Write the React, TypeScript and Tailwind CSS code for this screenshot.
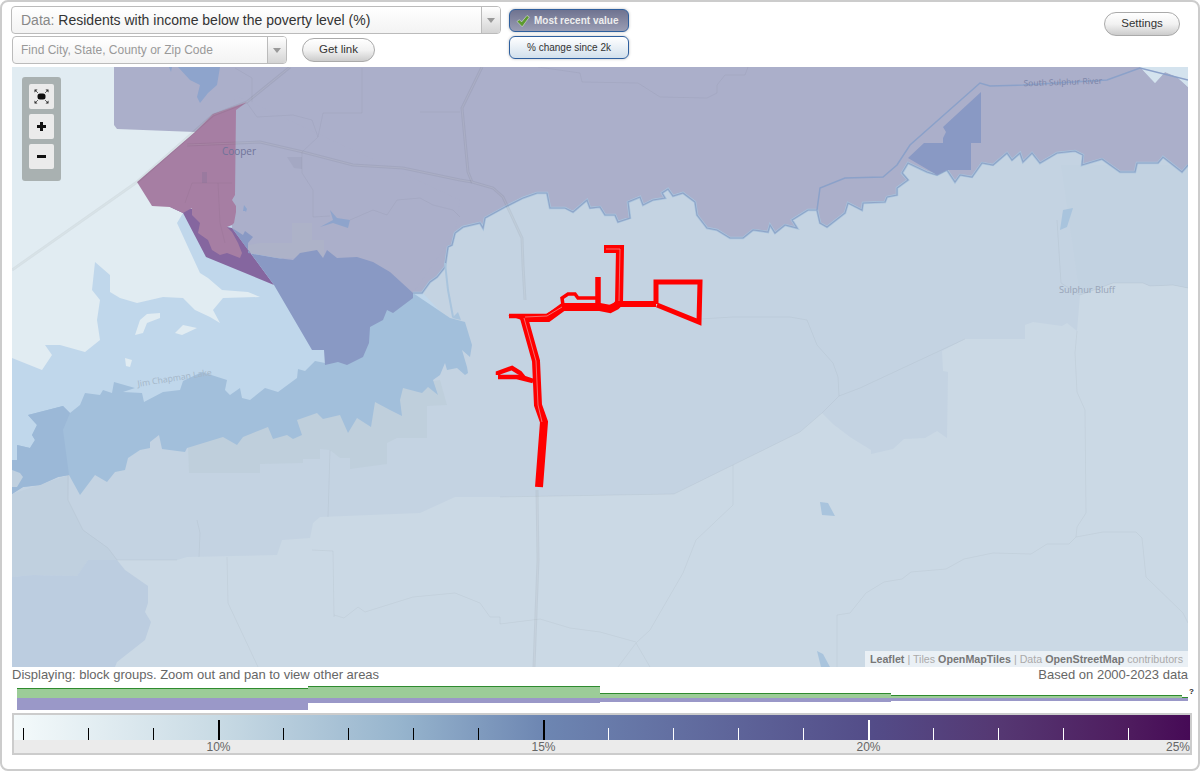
import { Fragment } from 'react';

// boundary of the top purple area, west to east
const purpleEdge =
  '413,293 422,293 430,282 437,277 445,267 448,247 452,245 455,233 463,227 480,223 483,228 485,218 505,207 523,198 537,193 547,193 550,208 565,208 573,212 587,200 590,208 600,207 605,215 615,215 618,222 630,218 628,202 640,197 643,205 653,200 665,198 662,193 668,189 673,196 683,193 695,202 697,215 707,228 717,230 730,238 743,238 753,230 768,232 770,225 775,233 785,225 797,228 792,220 808,210 817,210 820,223 827,227 845,213 848,203 862,210 863,203 885,202 887,197 897,195 897,188 908,180 902,173 908,163 927,172 937,175 947,170 955,182 960,175 972,177 982,163 993,165 1007,153 1012,160 1020,153 1023,162 1032,153 1040,163 1057,153 1075,151 1083,155 1082,165 1102,159 1120,172 1135,172 1137,163 1158,163 1163,157 1182,172 1188,165';

const bandEdge =
  '12,494 23,487 40,485 58,477 69,475 80,495 95,475 107,482 115,472 125,470 128,458 140,450 150,448 150,442 159,435 162,449 185,452 187,448 223,437 237,445 243,437 268,427 273,439 287,435 293,439 302,435 297,420 317,413 323,419 340,415 348,433 357,418 371,427 375,402 390,410 402,416 400,400 403,388 422,393 428,387 438,395 433,380 440,375 445,363 447,370 457,368 465,375 468,373 467,367 462,350 470,357 472,345 465,322 450,318 413,293 325,340 325,363 315,361 305,371 298,369 297,378 278,392 265,388 250,400 242,398 240,388 230,395 225,390 227,380 202,372 183,381 180,390 163,392 144,402 142,393 123,392 135,388 114,382 112,393 103,390 100,395 85,393 80,405 70,413 63,406 28,415 37,425 32,435 35,440 30,448 17,445 17,460 12,460';

const thinLines = [
  '538,67 580,73 582,82 638,83 660,97 707,98 717,93 717,85 725,75 745,75 748,67',
  '420,112 460,112',
  '235,68 252,78 252,102',
  '362,68 362,113 323,113 318,137 302,152 302,173 313,190 313,217 330,216',
  '247,103 257,117 293,115 312,120 318,137',
  '350,220 373,210 387,215 397,200 420,198 433,205 453,210 460,217',
  '192,183 232,183',
  '192,183 185,203',
  '218,183 220,223 225,243',
  '197,520 200,533 199,557',
  '227,557 228,603 258,667',
  '330,450 328,517',
  '312,550 333,551 334,617',
  '334,615 344,618 358,607 365,612 413,597 455,593 480,603 490,617 500,617 500,624 540,619 570,628 600,632 636,642',
  '733,465 733,505 696,540 683,573 650,630 636,643 618,667',
  '636,643 650,667',
  '700,319 733,317 790,317 807,320 817,345 833,363 838,377 839,396 822,413',
  '839,396 860,388 965,339',
  '1057,220 1061,283 1080,295',
  '1077,331 1075,353 1077,392 1085,410 1086,513 1077,527 1076,537 1069,544 1047,544 1031,554 993,553 964,559 946,569 911,572 902,579 884,582 866,593 850,613 837,615 837,667',
  '1076,537 1103,532 1136,532 1142,538 1146,577 1183,613 1188,623',
  '68,475 68,500 83,530 108,548 117,560 177,560',
  '500,497 674,494 800,432 822,413',
  '1080,295 1113,283 1143,283 1150,286 1173,285 1188,288',
];

const highways = [
  '12,270 137,182 213,115 247,102 290,67',
  '187,145 260,142 303,152 353,165 403,168 460,180 472,182',
  '482,67 462,108 468,172 472,182 493,188 503,197 522,238 523,265 525,300',
  '537,490 538,560 534,667',
];

function PoliticalMap() {
  return (
    <svg viewBox="12 67 1176 600" className="block h-[600px] w-[1176px]">
      <rect x="12" y="67" width="1176" height="600" fill="#cbd9e5" />
      {/* mid tint, everything north of the lower county line */}
      <polygon
        fill="#c4d3e2"
        points="12,67 1188,67 1188,288 1173,285 1150,286 1143,283 1113,283 1080,295 1077,331 1067,323 1062,326 1033,322 1025,325 1025,339 965,339 942,351 943,371 948,372 947,438 937,431 925,438 904,439 893,449 871,454 871,450 850,437 833,424 822,413 800,432 674,494 500,497 455,497 420,513 320,517 313,523 310,538 282,540 277,555 187,557 177,560 88,560 77,576 33,575 12,577"
      />
      <polygon fill="#c2d2e1" points="1061,165 1188,165 1188,288 1173,285 1150,286 1143,283 1113,283 1080,295" />
      <polygon fill="#c0d0df" points="12,494 69,475 68,500 83,530 108,548 117,560 88,560 77,576 33,575 12,577" />
      <polygon
        fill="#bccde0"
        points="12,577 33,575 77,576 88,560 117,560 125,570 148,586 148,603 145,612 151,622 145,640 117,662 115,667 12,667"
      />
      <polygon
        fill="#bfcfdc"
        points="188,445 189,473 260,473 260,464 303,463 303,459 320,459 320,449 330,450 340,458 350,458 350,469 387,464 387,443 397,438 427,438 427,406 447,405 440,380 300,400"
      />

      {/* lake and dry land to the north-west */}
      <polygon fill="#c0d7eb" points="12,340 92,262 170,200 330,240 420,290 472,345 300,400 200,430 70,430 12,470" />
      <polygon
        fill="#e1ecf2"
        points="12,67 250,67 250,215 183,213 177,223 188,247 200,273 208,278 222,290 248,292 260,297 223,298 213,310 220,323 210,317 195,310 183,298 163,297 137,303 120,298 110,292 110,275 95,262 92,290 100,300 97,320 100,340 85,352 60,345 45,345 52,355 42,370 12,358"
      />
      <polygon fill="#e1ecf2" points="140,320 147,314 160,313 160,318 147,323 143,333 135,335" />
      <polygon fill="#e1ecf2" points="175,333 183,325 197,328 182,335" />
      <polygon fill="#e1ecf2" points="125,358 132,360 130,367 126,366" />
      <polygon fill="#a2bfdb" points={bandEdge} />
      <polygon fill="#9bb8d7" points="28,415 63,406 70,413 63,430 69,475 58,477 40,485 23,487 12,494 12,460 17,460 17,445 30,448 35,440 32,435 37,425" />
      <polygon fill="#c0d0df" points="12,470 20,473 23,477 17,487 12,487" />

      {/* top purple area */}
      <polygon fill="#abafca" points={`114,67 1140,67 1155,83 1165,72 1177,77 1188,87 1188,165 ${purpleEdge.split(' ').reverse().join(' ')} 300,250 235,200 195,132 117,129 114,125`} />
      <polygon fill="#abafca" points="235,95 460,200 455,233 413,293 248,250 232,228 230,195" />
      <polygon fill="#d4e3ee" points="1140,67 1155,83 1165,72 1177,77 1188,87 1188,67" />
      <polyline fill="none" stroke="#a9c4dd" strokeWidth="2.5" points={purpleEdge} />
      <polyline fill="none" stroke="#8fa5c9" strokeWidth="1.2" points={purpleEdge} />

      {/* patches and water inside the purple */}
      <polygon fill="#adb2c8" points="248,245 260,243 292,243 292,223 312,223 312,240 324,240 324,258 300,258 277,258 248,253" />
      <polygon fill="#a4a8c3" points="287,157 302,157 302,169 294,168" />
      <polygon fill="#8ea4cc" points="178,67 190,80 200,85 197,97 200,103 208,93 217,85 220,67" />
      <polygon fill="#8ea4cc" points="169,67 172,67 171,72" />
      <polygon fill="#8ea4cc" points="320,227 333,220 330,210 337,218 350,220 348,228 333,223" />
      <polygon fill="#8ea4cc" points="243,211 245,211 246,212 247,209 244,205" />
      <polygon fill="#8999c4" points="981,92 943,127 946,132 943,138 943,143 981,143" />
      <polygon fill="#8999c4" points="924,143 971,143 971,170 947,170 937,175 908,158" />
      <polyline
        fill="none"
        stroke="#8ba1c9"
        strokeWidth="1.5"
        points="1188,80 1140,68 1107,80 1023,85 990,86 980,83 910,145 897,165 883,177 845,178 820,188 817,210"
      />
      <polygon fill="#a9c4dd" points="1060,230 1063,210 1073,208 1067,227" />
      <polygon fill="#a9c4dd" points="820,502 828,503 835,516 822,515" />
      <polygon fill="#a9c4dd" points="817,651 823,654 830,667 821,667" />
      <polyline fill="none" stroke="#a9c4dd" strokeWidth="2" points="445,263 448,290 453,317" />
      <polygon fill="#a9c4dd" points="452,318 458,312 461,320" />

      {/* pink block group with its darker lake shore */}
      <polygon
        fill="#85669f"
        points="170,207 183,213 206,257 274,285 232,228 227,227 210,210"
      />
      <polygon
        fill="#8999c4"
        points="274,285 232,228 243,235 245,231 253,237 248,243 248,253 277,258 293,260 300,253 317,250 323,258 327,250 337,258 357,257 373,262 390,272 413,293 413,298 393,313 387,310 383,320 370,327 369,343 363,357 347,365 338,362 325,365 324,350 312,350"
      />
      <polygon
        fill="#a67ea3"
        points="137,182 195,132 213,114 247,102 236,110 235,195 232,200 236,206 236,212 234,223 232,225 227,227 232,232 238,243 242,253 240,258 227,253 220,255 212,250 208,240 198,233 200,223 192,215 192,208 183,213 170,207 152,206"
      />
      <rect x="202" y="172" width="5" height="11" fill="#9a7a9f" />

      <g fill="none" stroke="#000000" strokeOpacity="0.035" strokeWidth="1">
        {thinLines.map((pts) => (
          <polyline key={pts} points={pts} />
        ))}
      </g>
      {highways.map((pts) => (
        <Fragment key={pts}>
          <polyline fill="none" stroke="#000000" strokeOpacity="0.05" strokeWidth="3" points={pts} />
          <polyline fill="none" stroke="#ffffff" strokeOpacity="0.1" strokeWidth="1" points={pts} />
        </Fragment>
      ))}

      <g fontFamily="'Open Sans', sans-serif">
        <text x="239" y="155" textAnchor="middle" fontSize="10" fill="#6f7399">
          Cooper
        </text>
        <text x="1063" y="85" textAnchor="middle" fontSize="8.5" fill="#7c85a8" transform="rotate(-2 1063 85)">
          South Sulphur River
        </text>
        <text x="1087" y="293" textAnchor="middle" fontSize="9.2" fill="#98a4b7">
          Sulphur Bluff
        </text>
        <text x="175" y="381" textAnchor="middle" fontSize="8.7" fill="#a4b6c8" transform="rotate(-9 175 381)">
          Jim Chapman Lake
        </text>
      </g>

      {/* selected route */}
      <g fill="none" stroke="#ff0000" strokeLinejoin="miter">
        <polyline strokeWidth="4.5" points="498,375 498,373 512,368 520,373 524,378 533,381 517,377 498,377" />
        <polyline strokeWidth="5" points="656,304 656,282 700,282 699,322 657,305" />
        <polyline strokeWidth="5.5" points="598,277 598,305" />
        <polyline strokeWidth="3.5" points="563,305 562,298 568,294 575,294 578,298 597,298" />
        <polyline strokeWidth="4.5" points="509,316 547,316 562,307" />
        <polyline
          strokeWidth="8"
          points="604,249 620,249 619,303 616,306 610,309 600,307 563,307 548,318 524,318 536,361 538,405 544,422 539,487"
        />
        <polyline strokeWidth="6" points="616,304 656,304" />
      </g>
      <polygon fill="#ff0000" points="508,315 524,315 524,321" />
      <g fill="none" stroke="#f08a8a" strokeWidth="0.8">
        <polyline points="606,249 620,249 619,301" />
        <polyline points="524,318 536,361 538,405 542,422" />
        <polyline points="525,317 547,316 562,307" />
      </g>
    </svg>
  );
}

function ZoomControls() {
  return (
    <div className="absolute left-[10px] top-[10px] flex h-[104px] w-[39px] flex-col items-center gap-[5px] rounded-[3px] bg-[#a9b1b1] pt-[7px]">
      <button className="flex h-[25px] w-[25px] items-center justify-center rounded-[2px] bg-[#ebebeb]">
        <svg width="17" height="17" viewBox="0 0 17 17">
          <rect x="4.5" y="5.5" width="8" height="6" rx="2.5" fill="#111" />
          <path d="M1.5 1.5h3l-3 3zM15.5 1.5h-3l3 3zM1.5 15.5h3l-3-3zM15.5 15.5h-3l3-3z" fill="#222" />
          <path d="M2.5 2.5l2.5 2.5M14.5 2.5L12 5M2.5 14.5L5 12M14.5 14.5L12 12" stroke="#444" strokeWidth="0.8" />
        </svg>
      </button>
      <button className="flex h-[25px] w-[25px] items-center justify-center rounded-[2px] bg-[#ebebeb]">
        <svg width="11" height="11" viewBox="0 0 11 11">
          <path d="M4 1h3v3h3v3H7v3H4V7H1V4h3z" fill="#111" />
        </svg>
      </button>
      <button className="flex h-[25px] w-[25px] items-center justify-center rounded-[2px] bg-[#ebebeb]">
        <svg width="11" height="11" viewBox="0 0 11 11">
          <rect x="1" y="4" width="9" height="3" fill="#111" />
        </svg>
      </button>
    </div>
  );
}

function SelectArrow() {
  return (
    <span className="flex h-full w-[19px] shrink-0 items-center justify-center border-l border-[#bbbbbb] bg-gradient-to-b from-[#ffffff] to-[#d4d4d4]">
      <span className="mt-[1px] h-0 w-0 border-x-[4px] border-t-[5px] border-x-transparent border-t-[#999999]" />
    </span>
  );
}

function PillButton({ label, className }: { label: string; className: string }) {
  return (
    <button
      className={`h-[24px] rounded-full border border-[#aaaaaa] bg-gradient-to-b from-[#ffffff] via-[#f2f2f2] to-[#cccccc] text-[11.5px] text-[#333333] ${className}`}
    >
      {label}
    </button>
  );
}

const greenBars = [
  'h-[10px] w-[291px]',
  'h-[12px] w-[292px]',
  'h-[5px] w-[291px]',
  'h-[3px] w-[291px]',
  'h-[1px] w-[6px]',
];
const purpleBars = ['h-[12px] w-[291px]', 'h-[5px] w-[292px]', 'h-[4px] w-[291px]', 'h-[3px] w-[297px]'];

const ticks = Array.from({ length: 18 }, (_, i) => i);

export default function App() {
  return (
    <div className="h-[771px] w-[1200px] overflow-hidden rounded-lg border-2 border-[#cccccc] bg-white font-['Liberation_Sans',Arial,sans-serif]">
      <header className="flex h-[65px] pl-[9px] pt-[4px]">
        <div className="w-[490px]">
          <div className="flex h-[28px] items-center overflow-hidden rounded-[4px] border border-[#bbbbbb] bg-gradient-to-b from-[#ffffff] to-[#f3f3f3]">
            <span className="flex-1 pl-[9px] text-[14px] text-[#333333]">
              <span className="text-[#888888]">Data: </span>Residents with income below the poverty level (%)
            </span>
            <SelectArrow />
          </div>
          <div className="mt-[2px] flex items-center pl-[1px]">
            <div className="flex h-[28px] w-[275px] items-center overflow-hidden rounded-[4px] border border-[#bbbbbb] bg-gradient-to-b from-[#ffffff] to-[#f3f3f3]">
              <span className="flex-1 pl-[8px] text-[12px] text-[#999999]">Find City, State, County or Zip Code</span>
              <SelectArrow />
            </div>
            <PillButton label="Get link" className="ml-[15px] w-[73px]" />
          </div>
        </div>
        <div className="ml-[8px] mt-[3px] flex w-[120px] flex-col gap-[4px]">
          <button className="flex h-[23px] items-center gap-[4px] rounded-[6px] border border-[#2e5f9e] bg-gradient-to-b from-[#6f7390] to-[#9a9db3] pl-[6px] text-[10px] font-bold text-[#eeeeee] shadow-[0_0_3px_#bbbbbb]">
            <svg width="14" height="14" viewBox="0 0 14 14">
              <path d="M1 7.5l2.4-1.8 2.2 2.2L11 1.5l2.4 1.5-7.2 9.8z" fill="#5c9a2e" stroke="#dddddd" strokeWidth="0.6" />
            </svg>
            Most recent value
          </button>
          <button className="h-[23px] rounded-[6px] border border-[#2e5f9e] bg-gradient-to-b from-[#ffffff] to-[#d2e0ec] text-[10px] text-[#333333] shadow-[0_0_3px_#bbbbbb]">
            % change since 2k
          </button>
        </div>
        <PillButton label="Settings" className="ml-auto mr-[18px] mt-[6px] w-[76px]" />
      </header>

      <main className="relative ml-[10px] h-[600px] w-[1176px] overflow-hidden">
        <PoliticalMap />
        <ZoomControls />
        <div className="absolute bottom-0 right-0 flex h-[16px] items-center bg-[#ffffff]/60 px-[5px] text-[10.7px] text-[#aaaaaa]">
          <b className="text-[#777777]">Leaflet</b>
          <span className="whitespace-pre"> | Tiles </span>
          <b className="text-[#777777]">OpenMapTiles</b>
          <span className="whitespace-pre"> | Data </span>
          <b className="text-[#777777]">OpenStreetMap</b>
          <span className="whitespace-pre"> contributors</span>
        </div>
      </main>

      <div className="ml-[10px] flex h-[16px] w-[1176px] items-center justify-between text-[13px] text-[#666666]">
        <span>Displaying: block groups. Zoom out and pan to view other areas</span>
        <span>Based on 2000-2023 data</span>
      </div>

      <div className="ml-[15px] mt-[2px]">
        <div className="flex h-[13px] items-end">
          {greenBars.map((size) => (
            <div key={size} className={`${size} border-t border-[#2f8b2f] bg-[#9ccc98]`} />
          ))}
          <span className="ml-[1px] self-center text-[8px] font-bold leading-none text-[#222222]">?</span>
        </div>
        <div className="flex h-[12px] items-start">
          {purpleBars.map((size) => (
            <div key={size} className={`${size} bg-[#9a98c8]`} />
          ))}
        </div>
      </div>

      <div className="ml-[10px] mt-[3px] h-[42px] w-[1180px] border-2 border-[#cccccc]">
        <div className="flex h-[25px] items-end overflow-hidden bg-[linear-gradient(90deg,#f4fafb_0%,#c8dae4_17.4%,#96b4cd_33%,#6d86b2_45%,#534c88_73%,#553772_84%,#4e1b5e_95%,#460a56_100%)] pl-[9px]">
          {ticks.map((i) => (
            <div key={i} className="flex w-[65px] shrink-0 items-end">
              <div
                className={`${i === 3 || i === 8 || i === 13 ? 'h-[20px] w-[2px]' : 'h-[12px] w-[1px]'} ${i > 8 ? 'bg-white' : 'bg-black'}`}
              />
            </div>
          ))}
        </div>
        <div className="flex h-[13px] items-center bg-[#ebebeb] pl-[42px] text-[12px] leading-none text-[#666666]">
          <span className="w-[325px] text-center">10%</span>
          <span className="w-[325px] text-center">15%</span>
          <span className="w-[325px] text-center">20%</span>
          <span className="flex-1 text-right">25%</span>
        </div>
      </div>
    </div>
  );
}
